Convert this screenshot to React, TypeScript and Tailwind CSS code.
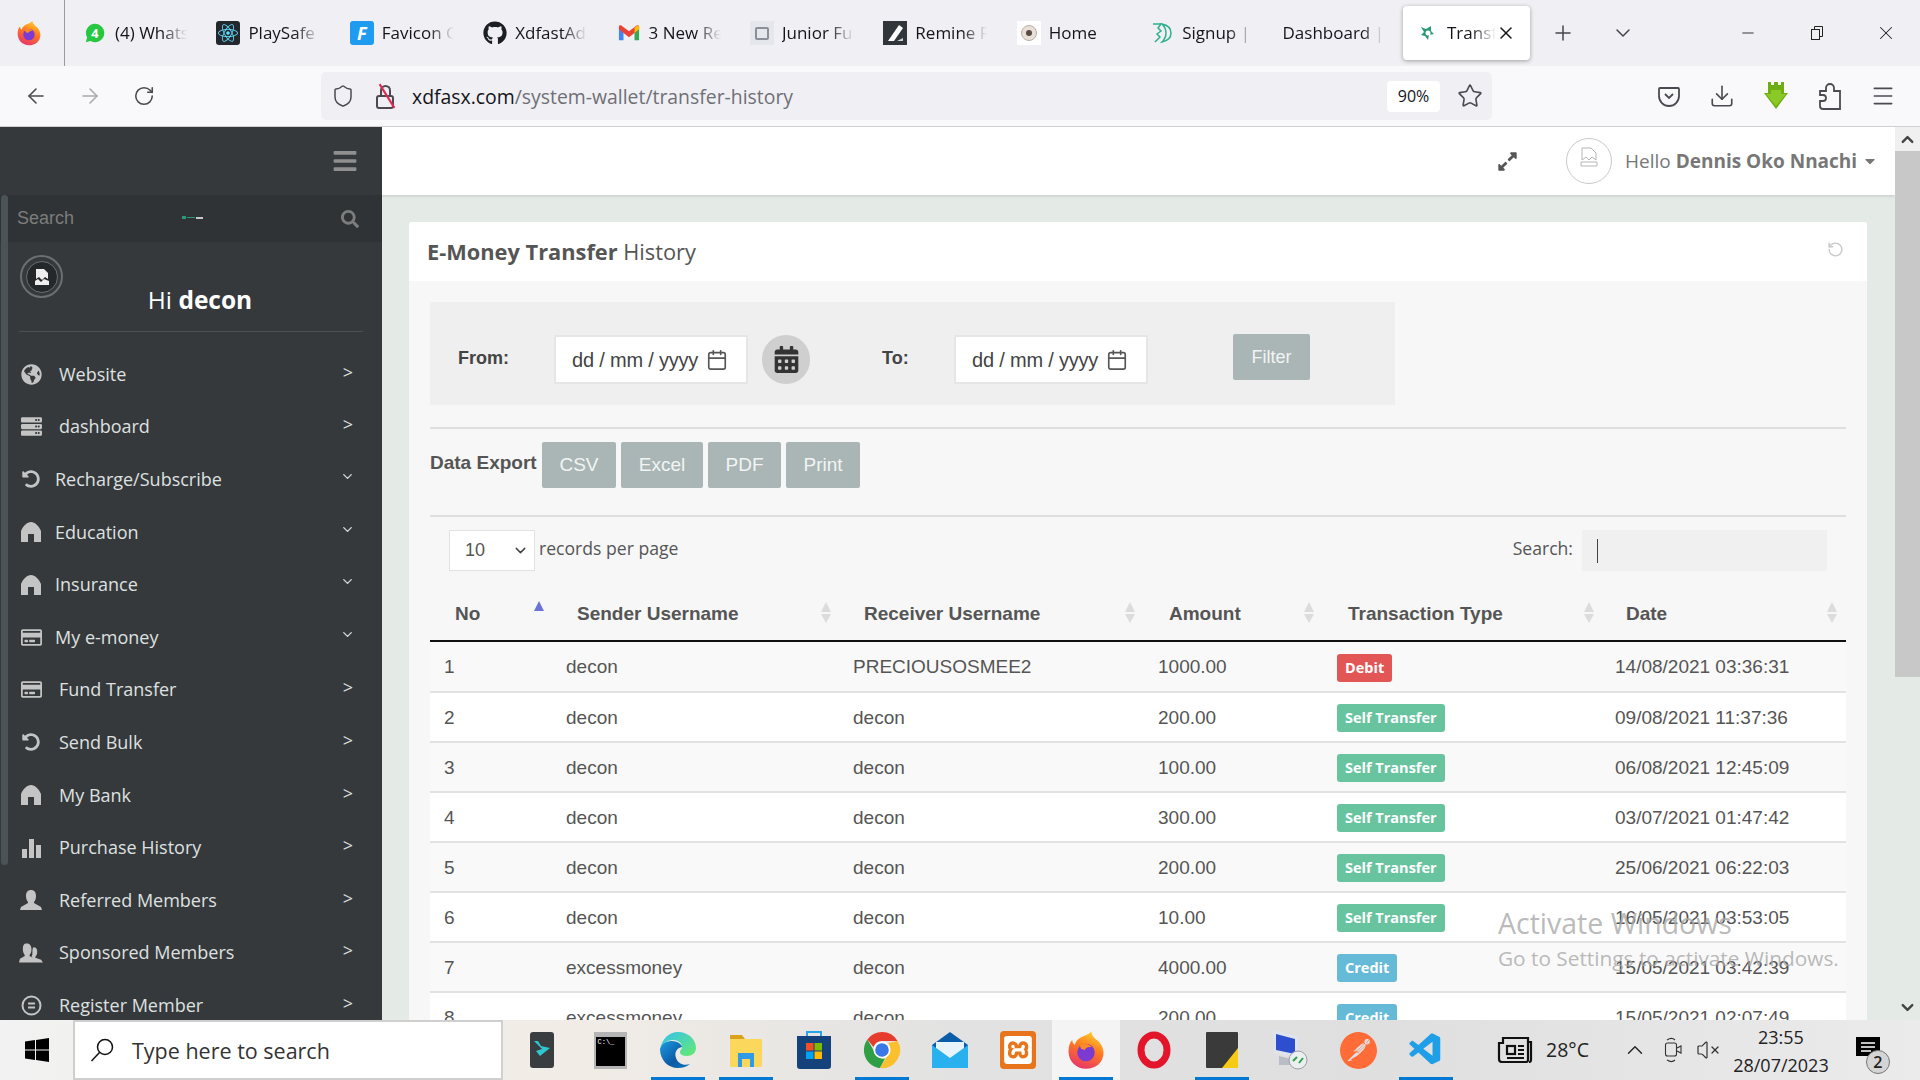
import { ReactNode } from 'react';
import {
  ArrowLeft,
  ArrowRight,
  Calendar,
  ChevronDown,
  ChevronUp,
  Download,
  Menu,
  Minus,
  Plus,
  RotateCcw,
  RotateCw,
  Shield,
  Star,
  VolumeX,
  X,
} from 'lucide-react';
import {
  FaBars,
  FaCalendarAlt,
  FaCaretDown,
  FaExpandAlt,
  FaGithub,
  FaGlobeAmericas,
  FaReact,
  FaRegCreditCard,
  FaSearch,
  FaServer,
  FaUndoAlt,
} from 'react-icons/fa';
import { SiPostman, SiXampp } from 'react-icons/si';
import { VscVscode } from 'react-icons/vsc';

const Firefox = ({ size }: { size: number }) => (
  <svg width={size} height={size} viewBox="0 0 32 32">
    <defs>
      <linearGradient id={`ff${size}`} x1="0.7" y1="0" x2="0.3" y2="1">
        <stop offset="0" stopColor="#ffd02e" />
        <stop offset="0.45" stopColor="#ff7a1f" />
        <stop offset="1" stopColor="#e8336c" />
      </linearGradient>
    </defs>
    <path
      d="M20 1c1 4 3 6 6 8 3 3 4 7 4 9 0 8-6 13-14 13S2 25 2 17c0-4 1-7 3-9 0 2 1 3 2 4 1-4 4-6 7-7 2-1 5-2 6-4z"
      fill={`url(#ff${size})`}
    />
    <circle cx="16" cy="18" r="7" fill="#7b3bd0" />
    <path d="M11 12c3-2 8-1 10 2-3-1-5 0-6 2l-3-1z" fill="#ff8a2a" />
  </svg>
);

const Whatsapp = () => (
  <svg width="22" height="24" viewBox="0 0 24 24">
    <path d="M12 2a10 10 0 0 0-8.6 15L2 22l5-1.4A10 10 0 1 0 12 2z" fill="#25c840" />
    <text x="12" y="17" textAnchor="middle" fontSize="14" fontWeight="700" fill="#fff" fontFamily="Open Sans">
      4
    </text>
  </svg>
);

const Gmail = () => (
  <svg width="22" height="18" viewBox="0 0 24 18">
    <path d="M1 17V3l5 4v10H2a1 1 0 0 1-1-1z" fill="#4285f4" />
    <path d="M23 17V3l-5 4v10h4a1 1 0 0 0 1-1z" fill="#34a853" />
    <path d="M1 5V2c0-1.5 2-2 3-1l8 6 8-6c1-1 3-.5 3 1v3l-5 4-6 4.500-6-4.500z" fill="#ea4335" />
    <path d="M18 3l3-2c1-.6 2 .4 2 1v3l-5 4z" fill="#fbbc04" />
  </svg>
);

const tabs: { label: string; icon: ReactNode }[] = [
  { label: '(4) WhatsApp', icon: <Whatsapp /> },
  {
    label: 'PlaySafe',
    icon: (
      <div className="w-[24px] h-[24px] bg-[#23272e] rounded-[3px] flex items-center justify-center">
        <FaReact size={20} color="#61dafb" />
      </div>
    ),
  },
  {
    label: 'Favicon Generator',
    icon: (
      <div className="w-[24px] h-[24px] bg-[#1f9cf0] rounded-[3px] flex items-center justify-center text-white italic font-bold text-[18px] leading-none">
        F
      </div>
    ),
  },
  { label: 'XdfastAdmin', icon: <FaGithub size={24} color="#1b1f23" /> },
  { label: '3 New Results', icon: <Gmail /> },
  {
    label: 'Junior Full',
    icon: (
      <div className="w-[24px] h-[24px] bg-[#e4e7ec] flex items-center justify-center">
        <div className="w-[14px] h-[13px] border-2 border-[#8a8f98] rounded-[2px]" />
      </div>
    ),
  },
  {
    label: 'Remine Res',
    icon: (
      <svg width="24" height="24" viewBox="0 0 24 24">
        <rect width="24" height="24" fill="#30363a" />
        <path d="M5 20L16 4l4 3-9 13z" fill="#fff" />
        <path d="M14 20h6v-3z" fill="#cfd3d6" />
      </svg>
    ),
  },
  {
    label: 'Home',
    icon: (
      <div className="w-[24px] h-[24px] bg-white flex items-center justify-center">
        <div className="w-[16px] h-[16px] rounded-full bg-[#e9dfd6] border border-[#b9b0a8] flex items-center justify-center">
          <div className="w-[6px] h-[6px] rounded-full bg-[#5a4b42]" />
        </div>
      </div>
    ),
  },
  {
    label: 'Signup | Xd',
    icon: (
      <svg width="24" height="24" viewBox="0 0 24 24" fill="none" stroke="#2eb08e" strokeWidth="1.500">
        <path d="M3 3h8l-3 4 3 3-4 3 3 3-5 5" />
        <path d="M12 3c5 1 9 4 9 9s-4 8-9 9c3-3 4-6 4-9s-1-6-4-9z" />
      </svg>
    ),
  },
];

function Tabs() {
  return (
    <div className="h-[66px] bg-[#f0f0f4] flex items-start">
      <div className="w-[65px] h-[66px] border-r border-[#9a9a9e] flex items-center justify-center pr-[6px] shrink-0">
        <Firefox size={26} />
      </div>
      <div className="flex h-[66px] pl-[5px] w-[1338px] shrink-0">
        {tabs.map((t) => (
          <div key={t.label} className="w-[133.400px] flex items-center pl-[13px] gap-[8px] shrink-0">
            <div className="w-[24px] flex justify-center shrink-0">{t.icon}</div>
            <span className="w-[72px] overflow-hidden whitespace-nowrap text-[17px] text-[#15141a] [mask-image:linear-gradient(to_right,black_65%,transparent)]">
              {t.label}
            </span>
          </div>
        ))}
        <div className="flex items-center pl-[12px] w-[120px]">
          <span className="w-[100px] overflow-hidden whitespace-nowrap text-[17px] text-[#15141a] [mask-image:linear-gradient(to_right,black_80%,transparent)]">
            Dashboard | Xd
          </span>
        </div>
      </div>
      <div className="w-[127px] h-[54px] mt-[6px] bg-white rounded-[4px] shadow-[0_1px_4px_rgba(0,0,0,0.35)] flex items-center pl-[16px] shrink-0">
        <svg width="18" height="18" viewBox="0 0 18 18" className="mr-[10px] shrink-0">
          <path d="M2 3l5 2 5-3v5l3 3-5 1-1 5-3-4-4-1 3-3z" fill="#2b9a74" />
          <circle cx="9" cy="9" r="2.500" fill="#fff" />
        </svg>
        <span className="w-[49px] overflow-hidden whitespace-nowrap text-[17px] text-[#15141a] [mask-image:linear-gradient(to_right,black_50%,transparent)]">
          Transfer
        </span>
        <X size={20} strokeWidth={1.800} color="#15141a" />
      </div>
      <div className="flex items-center h-[66px]">
        <Plus size={24} strokeWidth={1.500} color="#45454d" className="ml-[21px]" />
        <ChevronDown size={24} strokeWidth={1.500} color="#45454d" className="ml-[36px]" />
        <Minus size={18} strokeWidth={1.200} color="#222" className="ml-[104px]" />
        <svg width="16" height="16" viewBox="0 0 16 16" fill="none" stroke="#222" className="ml-[52px]">
          <rect x="2.500" y="4.500" width="8" height="10" />
          <path d="M5.500 4.500v-3h8v10h-3" />
        </svg>
        <X size={22} strokeWidth={1.100} color="#222" className="ml-[50px]" />
      </div>
    </div>
  );
}

function AddressBar() {
  return (
    <div className="h-[61px] bg-[#f9f9fb] border-b border-[#cfcfd4] flex items-center shrink-0">
      <ArrowLeft size={24} strokeWidth={1.600} color="#4a4a52" className="ml-[24px]" />
      <ArrowRight size={24} strokeWidth={1.600} color="#a9a9ae" className="ml-[30px]" />
      <RotateCw size={22} strokeWidth={1.700} color="#4a4a52" className="ml-[31px]" />
      <div className="ml-[166px] w-[1171px] h-[48px] bg-[#f0f0f4] rounded-[5px] flex items-center">
        <Shield size={24} strokeWidth={1.500} color="#4a4a52" className="ml-[10px]" />
        <div className="relative ml-[19px] w-[22px] h-[26px] flex items-end justify-center">
          <div className="w-[18px] h-[14px] border-2 border-[#4a4a52] rounded-[3px]" />
          <div className="absolute top-[2px] w-[11px] h-[12px] border-2 border-[#4a4a52] rounded-t-full border-b-0" />
          <div className="absolute top-[12px] left-[-1px] w-[28px] h-[2px] bg-[#e22850] rotate-[58deg]" />
        </div>
        <span className="ml-[16px] mt-[2px] text-[19.400px] whitespace-nowrap text-[#15141a]">
          xdfasx.com<span className="text-[#6f6f76]">/system-wallet/transfer-history</span>
        </span>
        <div className="ml-auto w-[53px] h-[31px] bg-white rounded-[4px] flex items-center justify-center text-[16px] text-[#15141a]">
          90%
        </div>
        <Star size={26} strokeWidth={1.500} color="#4a4a52" className="ml-[17px] mr-[9px]" />
      </div>
      <svg width="24" height="24" viewBox="0 0 24 24" fill="none" stroke="#4a4a52" strokeWidth="1.800" className="ml-[165px]">
        <path d="M3 4h18a1 1 0 0 1 1 1v7a10 10 0 0 1-20 0V5a1 1 0 0 1 1-1z" />
        <path d="M8 10l4 4 4-4" />
      </svg>
      <Download size={26} strokeWidth={1.500} color="#4a4a52" className="ml-[28px]" />
      <svg width="26" height="30" viewBox="0 0 26 30" className="ml-[28px]">
        <path d="M5 1h3v3h3V1h4v3h3V1h3v11h4L13 28 1 12h4z" fill="#6fae13" />
        <path d="M8 9h10v4h5L13 25 3 13h5z" fill="#8ac926" />
      </svg>
      <svg width="26" height="30" viewBox="0 0 26 30" fill="none" stroke="#4a4a52" strokeWidth="1.800" className="ml-[28px]">
        <path d="M3 10h6V7a4 4 0 0 1 8 0v3h6v18H6a3 3 0 0 1-3-3v-5h3a3 3 0 0 0 0-6H3z" />
      </svg>
      <Menu size={26} strokeWidth={1.500} color="#4a4a52" className="ml-[27px]" />
    </div>
  );
}

const HomeIcon = () => (
  <svg width="20" height="20" viewBox="0 0 20 20" fill="#c4c4c4">
    <path d="M0 9C2 4 6 0 10 0s8 4 10 9v11h-7v-8H7v8H0z" />
  </svg>
);

const BarsIcon = () => (
  <svg width="20" height="20" viewBox="0 0 20 20" fill="#c4c4c4">
    <rect x="1" y="11" width="5" height="9" />
    <rect x="8" y="1" width="5" height="19" />
    <rect x="15" y="7" width="5" height="13" />
  </svg>
);

const UserIcon = () => (
  <svg width="22" height="20" viewBox="0 0 22 20" fill="#c4c4c4">
    <path d="M11 0c3 0 5 2 5 6 0 3-1 5-2 6v1l7 4 1 3H0l1-3 7-4v-1c-1-1-2-3-2-6 0-4 2-6 5-6z" />
  </svg>
);

const UsersIcon = () => (
  <svg width="25" height="20" viewBox="0 0 25 20" fill="#c4c4c4">
    <path d="M15 4c3 0 4 2 4 5 0 2-1 4-2 5v1l6 2 2 3h-8l-2-4-2-2c2-3 0-7 2-10z" />
    <path d="M8 0c3 0 5 2 5 6 0 3-1 5-2 6v1l5 3 1 4H0l1-4 5-3v-1C5 11 4 9 4 6c0-4 1-6 4-6z" />
  </svg>
);

const RegisterIcon = () => (
  <svg width="21" height="21" viewBox="0 0 21 21" fill="none" stroke="#c4c4c4" strokeWidth="2">
    <circle cx="10.500" cy="10.500" r="9" />
    <path d="M7 8.500h7M7 12.500h7" />
  </svg>
);

const I = { className: 'text-[#c4c4c4]' };

const menu: { label: string; icon: ReactNode; open?: boolean }[] = [
  { label: 'Website', icon: <FaGlobeAmericas size={21} {...I} /> },
  { label: 'dashboard', icon: <FaServer size={21} {...I} /> },
  { label: 'Recharge/Subscribe', icon: <FaUndoAlt size={18} {...I} />, open: true },
  { label: 'Education', icon: <HomeIcon />, open: true },
  { label: 'Insurance', icon: <HomeIcon />, open: true },
  { label: 'My e-money', icon: <FaRegCreditCard size={21} {...I} />, open: true },
  { label: 'Fund Transfer', icon: <FaRegCreditCard size={21} {...I} /> },
  { label: 'Send Bulk', icon: <FaUndoAlt size={18} {...I} /> },
  { label: 'My Bank', icon: <HomeIcon /> },
  { label: 'Purchase History', icon: <BarsIcon /> },
  { label: 'Referred Members', icon: <UserIcon /> },
  { label: 'Sponsored Members', icon: <UsersIcon /> },
  { label: 'Register Member', icon: <RegisterIcon /> },
];

function Sidebar() {
  return (
    <aside className="relative w-[382px] h-full bg-[#35393b] shrink-0 overflow-hidden font-['Open_Sans',sans-serif]">
      <div className="absolute left-[1px] top-[68px] w-[7px] h-[670px] rounded-[4px] bg-[#4c5356]" />
      <div className="h-[68px] flex items-center justify-end pr-[24px]">
        <FaBars size={26} color="#8f8f8f" />
      </div>
      <div className="h-[47px] bg-[#2f3335] flex items-center pl-[17px] pr-[23px]">
        <span className="text-[18px] text-[#7d7d7d] font-['Liberation_Sans',sans-serif]">Search</span>
        <div className="ml-[108px] flex items-center gap-[1px] -mt-[2px]">
          <div className="w-[4px] h-[3px] bg-[#2b9a74]" />
          <div className="w-[8px] h-[1px] bg-[#2b9a74]" />
          <div className="w-[7px] h-[2px] bg-[#c8c8c8]" />
        </div>
        <FaSearch size={18} color="#7d7d7d" className="ml-auto" />
      </div>
      <div className="ml-[20px] mt-[13px] w-[43px] h-[43px] rounded-full border-2 border-[#6b6f71] flex items-center justify-center">
        <div className="w-[32px] h-[32px] rounded-full border border-[#6b6f71] bg-[#25282a] flex items-center justify-center">
          <svg width="18" height="18" viewBox="0 0 18 18" fill="#eee">
            <path d="M3 1h8l4 4v6l-3-2-3 3-3-3-3 2zM2 13l3-2 3 3 3-3 5 2v4H2z" />
          </svg>
        </div>
      </div>
      <div className="-mt-[15px] h-[34px] text-center text-[24.500px] leading-[34px] text-white pl-[18px]">
        Hi <b>decon</b>
      </div>
      <div className="mx-[19px] mt-[14px] mb-[16px] border-t border-[#4c5052]" />
      {menu.map((m) => (
        <div key={m.label} className="h-[52.600px] flex items-center pl-[19px] pr-[29px]">
          <div className="w-[24px] flex justify-center shrink-0">{m.icon}</div>
          <span className={`text-[18px] text-[#dfe0e0] whitespace-nowrap ${m.open ? 'ml-[12px]' : 'ml-[16px]'}`}>
            {m.label}
          </span>
          {m.open ? (
            <ChevronDown size={15} strokeWidth={2.200} color="#d8d8d8" className="ml-auto -mt-[6px] -mr-[2px]" />
          ) : (
            <span className="ml-auto -mt-[4px] text-[18px] text-[#dfe0e0]">&gt;</span>
          )}
        </div>
      ))}
    </aside>
  );
}

const DateBox = () => (
  <div className="w-[194px] h-[49px] bg-white border-2 border-[#e6e6e6] flex items-center pl-[16px] text-[20px] tracking-[-0.2px] text-[#444] whitespace-nowrap">
    dd / mm / yyyy
    <Calendar size={22} strokeWidth={1.800} color="#555" className="ml-[8px]" />
  </div>
);

const ExportBtn = ({ label, w }: { label: string; w: string }) => (
  <div className={`${w} h-[46px] bg-[#a9b6b5] rounded-[2px] flex items-center justify-center text-[19px] text-[#f2f4f4]`}>{label}</div>
);

type Row = { no: number; sender: string; receiver: string; amount: string; type: string; date: string };

const rows: Row[] = [
  { no: 1, sender: 'decon', receiver: 'PRECIOUSOSMEE2', amount: '1000.00', type: 'Debit', date: '14/08/2021 03:36:31' },
  { no: 2, sender: 'decon', receiver: 'decon', amount: '200.00', type: 'Self Transfer', date: '09/08/2021 11:37:36' },
  { no: 3, sender: 'decon', receiver: 'decon', amount: '100.00', type: 'Self Transfer', date: '06/08/2021 12:45:09' },
  { no: 4, sender: 'decon', receiver: 'decon', amount: '300.00', type: 'Self Transfer', date: '03/07/2021 01:47:42' },
  { no: 5, sender: 'decon', receiver: 'decon', amount: '200.00', type: 'Self Transfer', date: '25/06/2021 06:22:03' },
  { no: 6, sender: 'decon', receiver: 'decon', amount: '10.00', type: 'Self Transfer', date: '16/05/2021 03:53:05' },
  { no: 7, sender: 'excessmoney', receiver: 'decon', amount: '4000.00', type: 'Credit', date: '15/05/2021 03:42:39' },
  { no: 8, sender: 'excessmoney', receiver: 'decon', amount: '200.00', type: 'Credit', date: '15/05/2021 02:07:49' },
];

const badgeColor: Record<string, string> = {
  Debit: 'bg-[#e35656]',
  'Self Transfer': 'bg-[#68c49f]',
  Credit: 'bg-[#65bad8]',
};

const headers = [
  { label: 'No', w: 'w-[122px]', arrow: 'right-[8px]' },
  { label: 'Sender Username', w: 'w-[287px]', arrow: 'right-[8px]' },
  { label: 'Receiver Username', w: 'w-[305px]', arrow: 'right-[9px]' },
  { label: 'Amount', w: 'w-[179px]', arrow: 'right-[9px]' },
  { label: 'Transaction Type', w: 'w-[278px]', arrow: 'right-[7px]' },
  { label: 'Date', w: 'w-[245px]', arrow: 'right-[9px]' },
];

function TransferTable() {
  return (
    <table className="mt-[16px] w-[1416px] table-fixed border-collapse font-['Liberation_Sans',sans-serif] text-[19px] text-[#555]">
      <thead>
        <tr className="border-b-2 border-[#111]">
          {headers.map((h, i) => (
            <th key={h.label} className={`${h.w} h-[54px] relative text-left font-bold pl-[25px] pt-[2px] text-[#555]`}>
              {h.label}
              <span className={`absolute ${h.arrow} ${i === 0 ? 'top-[14px]' : 'top-[15px]'} flex flex-col gap-[2px] items-center`}>
                <span className={`w-0 h-0 border-x-[5px] border-x-transparent border-b-[10px] ${i === 0 ? 'border-b-[#6b73d8]' : 'border-b-[#dcdcdc]'}`} />
                {i > 0 && <span className="w-0 h-0 border-x-[5px] border-x-transparent border-t-[9px] border-t-[#dcdcdc]" />}
              </span>
            </th>
          ))}
        </tr>
      </thead>
      <tbody>
        {rows.map((r, i) => (
          <tr
            key={r.no}
            className={`${i === 0 ? 'h-[51px]' : 'h-[50px]'} border-b-2 border-[#e2e2e2] ${r.no % 2 === 1 ? 'bg-[#f9f9f9]' : 'bg-white'}`}
          >
            <td className="pl-[14px] pt-[2px]">{r.no}</td>
            <td className="pl-[14px] pt-[2px]">{r.sender}</td>
            <td className="pl-[14px] pt-[2px]">{r.receiver}</td>
            <td className="pl-[14px] pt-[2px]">{r.amount}</td>
            <td className="pl-[14px] pt-[2px]">
              <span className={`inline-block h-[28px] leading-[28px] px-[8px] rounded-[3px] text-[14.500px] font-bold text-white align-middle font-['Open_Sans',sans-serif] ${badgeColor[r.type]}`}>
                {r.type}
              </span>
            </td>
            <td className="pl-[14px] pt-[2px]">{r.date}</td>
          </tr>
        ))}
      </tbody>
    </table>
  );
}

function Content() {
  return (
    <div className="relative flex-1 min-w-0 h-full bg-[#e4eae6] overflow-hidden font-['Open_Sans',sans-serif]">
      <header className="h-[68px] bg-white shadow-[0_1px_3px_rgba(0,0,0,0.15)] flex items-center text-[19px] text-[#777]">
        <FaExpandAlt size={21} color="#555" className="ml-[1115px]" />
        <div className="ml-[48px] w-[46px] h-[46px] rounded-full border border-[#c9c9c9] flex items-start justify-center pt-[8px]">
          <svg width="18" height="20" viewBox="0 0 18 20" fill="none" stroke="#b5b5b5">
            <path d="M2 1h9l5 5v7l-4-3-3 3-3-3-4 3zM1 15h16v4H1z" />
          </svg>
        </div>
        <span className="ml-[13px] whitespace-nowrap">
          Hello <b>Dennis Oko Nnachi</b>
        </span>
        <FaCaretDown size={16} color="#777" className="ml-[5px]" />
      </header>

      <section className="ml-[27px] mt-[27px] w-[1458px]">
        <div className="h-[59px] bg-white flex items-center pl-[18px] pr-[23px] text-[21.800px] text-[#555] rounded-t-[2px]">
          <span className="mt-[2px]">
            <b>E-Money Transfer</b> History
          </span>
          <RotateCcw size={17} color="#c8c8c8" className="ml-auto -mt-[4px]" />
        </div>
        <div className="bg-[#f7f7f7] pt-[21px] px-[21px]">
          <div className="h-[103px] w-[965px] bg-[#efefef] flex items-center pl-[28px] pt-[12px] font-['Liberation_Sans',sans-serif]">
            <span className="w-[96px] text-[18px] font-bold text-[#444] -mt-[2px]">From:</span>
            <DateBox />
            <div className="ml-[14px] w-[48px] h-[49px] rounded-full bg-[#cfcfcf] flex items-center justify-center">
              <FaCalendarAlt size={27} color="#333" />
            </div>
            <span className="ml-[72px] w-[72px] text-[18px] font-bold text-[#444] -mt-[2px]">To:</span>
            <DateBox />
            <div className="ml-[85px] -mt-[5px] w-[77px] h-[46px] bg-[#a9b6b5] rounded-[2px] flex items-center justify-center text-[18px] text-[#f2f4f4]">
              Filter
            </div>
          </div>
          <div className="mt-[22px] border-t-2 border-[#dedede]" />
          <div className="mt-[13px] flex items-center gap-[5px] font-['Liberation_Sans',sans-serif]">
            <span className="w-[107px] whitespace-nowrap text-[19px] font-bold text-[#555] -mt-[3px]">Data Export</span>
            <ExportBtn label="CSV" w="w-[74px]" />
            <ExportBtn label="Excel" w="w-[82px]" />
            <ExportBtn label="PDF" w="w-[73px]" />
            <ExportBtn label="Print" w="w-[74px]" />
          </div>
          <div className="mt-[27px] border-t-2 border-[#dedede]" />
          <div className="mt-[13px] h-[41px] flex items-center pl-[19px] pr-[19px] text-[17.600px] text-[#555]">
            <div className="w-[86px] h-[41px] bg-white border border-[#e2e2e2] flex items-center pl-[15px] text-[#555] font-['Liberation_Sans',sans-serif] text-[18px]">
              10
              <ChevronDown size={17} strokeWidth={2} color="#444" className="ml-auto mr-[5px]" />
            </div>
            <span className="ml-[4px] -mt-[5px]">records per page</span>
            <span className="ml-auto -mt-[5px]">Search:</span>
            <div className="ml-[9px] w-[245px] h-[41px] bg-[#f0f0f0] flex items-center pl-[15px]">
              <div className="w-[1px] h-[24px] bg-[#444]" />
            </div>
          </div>
          <TransferTable />
        </div>
      </section>

      <div className="absolute left-[1116px] top-[778px] text-[28.500px] leading-[36px] text-[#a8a8a8]/80 whitespace-nowrap pointer-events-none">
        Activate Windows
      </div>
      <div className="absolute left-[1116px] top-[817px] text-[20.800px] leading-[28px] text-[#a8a8a8]/80 whitespace-nowrap pointer-events-none">
        Go to Settings to activate Windows.
      </div>
    </div>
  );
}

function Scrollbar() {
  return (
    <div className="w-[25px] h-full bg-[#e4eae6] flex flex-col items-center shrink-0">
      <div className="w-full h-[24px] bg-[#f0f0f0] flex items-center justify-center">
        <ChevronUp size={19} strokeWidth={3} color="#444" />
      </div>
      <div className="w-full h-[526px] bg-[#c8c8c8]" />
      <ChevronDown size={19} strokeWidth={3} color="#444" className="mt-[321px]" />
    </div>
  );
}

const taskIcons: { key: string; icon: ReactNode; line?: boolean; active?: boolean }[] = [
  {
    key: 'bolt',
    icon: (
      <svg width="24" height="36" viewBox="0 0 24 36">
        <rect width="24" height="36" rx="3" fill="#3a3d40" />
        <path d="M4 9l8 8-6 2 4 5 10-8-9-2-3-5z" fill="#2ec7d0" />
      </svg>
    ),
  },
  {
    key: 'cmd',
    icon: (
      <div className="w-[33px] h-[37px] bg-[#b4b4b4] pt-[5px] px-[2px] pb-[3px]">
        <div className="w-full h-full bg-black text-white text-[7px] leading-[10px] font-['Liberation_Mono',monospace] pl-[2px]">C:\_</div>
      </div>
    ),
  },
  {
    key: 'edge',
    line: true,
    icon: (
      <svg width="38" height="38" viewBox="0 0 38 38">
        <defs>
          <linearGradient id="edge" x1="0" y1="0" x2="1" y2="1">
            <stop offset="0" stopColor="#1b9de2" />
            <stop offset="0.6" stopColor="#0c59a4" />
            <stop offset="1" stopColor="#0a78c2" />
          </linearGradient>
          <linearGradient id="edge2" x1="0" y1="0" x2="1" y2="1">
            <stop offset="0" stopColor="#35c1f1" />
            <stop offset="1" stopColor="#66eb6e" />
          </linearGradient>
        </defs>
        <path d="M19 1c11 0 18 8 18 16 0 5-4 8-9 8-3 0-7-1-7-4 0-2 2-2 2-5 0-4-4-7-9-7-6 0-12 5-13 9C3 8 10 1 19 1z" fill="url(#edge2)" />
        <path d="M1 18c2-6 7-8 12-8 6 0 10 4 10 6-5 1-8 5-6 11 2 6 8 8 14 6-4 3-8 4-12 4C9 37 1 29 1 18z" fill="url(#edge)" />
      </svg>
    ),
  },
  {
    key: 'explorer',
    line: true,
    icon: (
      <svg width="34" height="36" viewBox="0 0 34 36">
        <path d="M1 3h12l3 4H1z" fill="#d9a21b" />
        <rect x="1" y="7" width="32" height="28" rx="1" fill="#fbd75b" />
        <path d="M9 35V21h16v14h-4v-8h-8v8z" fill="#2f9be6" />
      </svg>
    ),
  },
  {
    key: 'store',
    icon: (
      <svg width="36" height="40" viewBox="0 0 36 40">
        <path d="M11 6V2h14v4" fill="none" stroke="#29a5e6" strokeWidth="2" />
        <path d="M1 6h34v30a3 3 0 0 1-3 3H4a3 3 0 0 1-3-3z" fill="#14427a" />
        <rect x="10" y="13" width="7.500" height="7.500" fill="#f25022" />
        <rect x="18.500" y="13" width="7.500" height="7.500" fill="#7fba00" />
        <rect x="10" y="21.500" width="7.500" height="7.500" fill="#00a4ef" />
        <rect x="18.500" y="21.500" width="7.500" height="7.500" fill="#ffb900" />
      </svg>
    ),
  },
  {
    key: 'chrome',
    line: true,
    icon: (
      <svg width="38" height="38" viewBox="0 0 38 38">
        <path d="M19 1a18 18 0 0 1 15.600 9H19a9 9 0 0 0-8.500 6L4.400 8.500A18 18 0 0 1 19 1z" fill="#e53c2e" />
        <path d="M4.400 8.500l7.800 13.500A9 9 0 0 0 22 27.500L17 37A18 18 0 0 1 4.400 8.500z" fill="#2f9e44" />
        <path d="M34.600 10A18 18 0 0 1 17 37l8-13.500A9 9 0 0 0 25 12z" fill="#fbc02d" />
        <circle cx="19" cy="19" r="8.500" fill="#fff" />
        <circle cx="19" cy="19" r="6.800" fill="#3b78e7" />
      </svg>
    ),
  },
  {
    key: 'mail',
    icon: (
      <svg width="36" height="36" viewBox="0 0 36 36">
        <path d="M0 13L18 0l18 13v23H0z" fill="#0a5da8" />
        <path d="M4 10h28v8L18 28 4 18z" fill="#e8f4fb" />
        <path d="M0 13l18 13 18-13v23H0z" fill="#29b0ee" />
      </svg>
    ),
  },
  {
    key: 'xampp',
    icon: (
      <div className="w-[36px] h-[38px] rounded-[4px] bg-[#e8741c] flex items-center justify-center">
        <SiXampp size={28} color="#fff" />
      </div>
    ),
  },
  { key: 'firefox', active: true, icon: <Firefox size={40} /> },
  {
    key: 'opera',
    icon: (
      <svg width="36" height="38" viewBox="0 0 36 38">
        <ellipse cx="18" cy="19" rx="13" ry="15" fill="none" stroke="#e3152a" strokeWidth="7" />
      </svg>
    ),
  },
  {
    key: 'sticky',
    line: true,
    icon: (
      <svg width="32" height="36" viewBox="0 0 32 36">
        <rect width="32" height="36" rx="1" fill="#3a3a3a" />
        <path d="M16 36l16-20v20z" fill="#f7ca14" />
      </svg>
    ),
  },
  {
    key: 'rdp',
    icon: (
      <svg width="40" height="42" viewBox="0 0 40 42">
        <path d="M3 1l25 6v22L3 24z" fill="#dfe3ea" />
        <path d="M6 5l19 5v15L6 21z" fill="#2d4fcf" />
        <path d="M9 27l12 3v6H9z" fill="#b9bec6" />
        <circle cx="28" cy="31" r="9" fill="#ecefef" stroke="#9aa0a6" />
        <path d="M23 32l4-4M33 29l-4 5" stroke="#2aa34a" strokeWidth="2" />
      </svg>
    ),
  },
  {
    key: 'postman',
    icon: <SiPostman size={37} color="#ff6c37" />,
  },
  { key: 'vscode', line: true, icon: <VscVscode size={38} color="#1e9fe8" /> },
];

function Taskbar() {
  return (
    <div className="h-[60px] flex items-stretch bg-[linear-gradient(to_right,#f2f2f2_0%,#f1ece6_30%,#e2e2e2_50%,#dfdfdf_72%,#ebebeb_100%)] font-['Open_Sans',sans-serif] shrink-0">
      <div className="w-[73px] flex items-center justify-center shrink-0">
        <svg width="24" height="24" viewBox="0 0 24 24" fill="#000">
          <path d="M0 3.500l10-1.400V11.500H0zM11 2l13-2v11.500H11zM0 12.500h10v9.400L0 20.500zM11 12.500h13V24l-13-1.900z" />
        </svg>
      </div>
      <div className="w-[430px] bg-white border-2 border-[#cfcfcf] flex items-center shrink-0">
        <svg width="24" height="24" viewBox="0 0 24 24" fill="none" stroke="#111" strokeWidth="1.500" className="ml-[15px]">
          <circle cx="15" cy="9" r="7.500" />
          <path d="M9.500 14.500L1.500 23" />
        </svg>
        <span className="ml-[18px] mt-[3px] text-[21.500px] text-[#333]">Type here to search</span>
      </div>
      <div className="flex ml-[5px] shrink-0">
        {taskIcons.map((t) => (
          <div
            key={t.key}
            className={`relative w-[68px] flex items-center justify-center ${t.active ? 'bg-[#f4f4f4]' : ''}`}
          >
            {t.icon}
            {(t.line || t.active) && (
              <div className="absolute bottom-0 left-[7px] right-[7px] h-[3px] bg-[#0078d4]" />
            )}
          </div>
        ))}
      </div>
      <div className="flex items-center flex-1 text-[#222]">
        <svg width="36" height="26" viewBox="0 0 36 26" fill="none" stroke="#111" strokeWidth="2.200" className="ml-[37px]">
          <path d="M6 1h25v22a2 2 0 0 1-2 2H5a3 3 0 0 1-3-3V6h4z" />
          <path d="M31 5h3v18a2 2 0 0 1-2 2" />
          <rect x="10" y="9" width="8" height="8" />
          <path d="M21 9h6M21 13h6M21 17h6M10 21h17" />
        </svg>
        <span className="ml-[13px] text-[19.500px]">28°C</span>
        <ChevronUp size={26} strokeWidth={1.300} color="#222" className="ml-[33px]" />
        <svg width="18" height="26" viewBox="0 0 18 26" fill="none" stroke="#333" strokeWidth="1.100" className="ml-[16px]">
          <rect x="1.500" y="6" width="11" height="13" rx="2" />
          <path d="M13 11l4-2v7l-4-2M3 3c3-2 6-2 8 0M3 23c3 2 6 2 8 0" />
        </svg>
        <VolumeX size={24} strokeWidth={1.200} color="#333" className="ml-[14px]" />
        <div className="ml-[12px] w-[98px] flex flex-col items-center text-[18px] leading-[28px] text-[#222] pt-[1px]">
          <span>23:55</span>
          <span className="whitespace-nowrap">28/07/2023</span>
        </div>
        <div className="relative ml-[26px] w-[24px] h-[26px]">
          <svg width="24" height="26" viewBox="0 0 24 26">
            <path d="M0 0h24v19h-6l-5 7v-7H0z" fill="#000" />
            <path d="M5 6h14M5 10h14M5 14h10" stroke="#fff" strokeWidth="1.300" />
          </svg>
          <div className="absolute left-[10px] top-[13px] w-[24px] h-[24px] rounded-full bg-[#d4d4d4] border border-[#777] flex items-center justify-center text-[16px] font-semibold text-[#222]">
            2
          </div>
        </div>
      </div>
    </div>
  );
}

export default function App() {
  return (
    <div className="w-[1920px] h-[1080px] flex flex-col overflow-hidden font-['Open_Sans',sans-serif]">
      <Tabs />
      <AddressBar />
      <div className="flex h-[893px] min-h-0">
        <Sidebar />
        <Content />
        <Scrollbar />
      </div>
      <Taskbar />
    </div>
  );
}
